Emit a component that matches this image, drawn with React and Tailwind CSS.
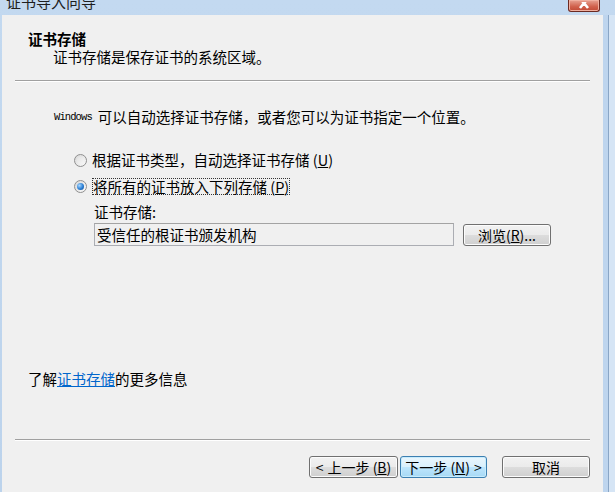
import React from "react";

const cjk = { fontFamily: '"Noto Sans CJK SC", "Noto Sans", sans-serif' };

function Key({ k }) {
  return (
    <span>
      (<span className="underline">{k}</span>)
    </span>
  );
}

function Radio({ checked }) {
  return (
    <span className="flex h-[13px] w-[13px] shrink-0 items-center justify-center rounded-full border border-[#8f8f8f] bg-gradient-to-br from-[#d8d8d8] to-[#fbfbfb]">
      {checked ? (
        <span className="h-[7px] w-[7px] rounded-full bg-[radial-gradient(circle_at_35%_35%,#a9d7ff,#2a7fd4_55%,#11468c)]" />
      ) : (
        <span className="h-[7px] w-[7px] rounded-full bg-gradient-to-br from-[#e4e4e4] to-[#f6f6f6]" />
      )}
    </span>
  );
}

function Btn({ children, primary, className = "" }) {
  return (
    <button
      className={
        "flex h-[22px] items-center justify-center rounded-[3px] border text-[14px] leading-none text-black " +
        (primary
          ? "border-[#3c7fb1] bg-[linear-gradient(#eaf6fd_0%,#d9f0fc_50%,#bee6fd_50%,#a7d9f5_100%)] shadow-[inset_0_0_0_1px_#c8ecfd] "
          : "border-[#707070] bg-[linear-gradient(#f2f2f2_0%,#ebebeb_50%,#dddddd_50%,#cfcfcf_100%)] shadow-[inset_0_0_0_1px_#fcfcfc] ") +
        className
      }
      style={cjk}
    >
      {children}
    </button>
  );
}

function Separator() {
  return <div className="mx-[13px] h-[2px] border-t border-[#a0a0a0] border-b border-b-white" />;
}

export default function App() {
  return (
    <div className="flex h-[492px] w-[615px] flex-col overflow-hidden bg-[linear-gradient(#c3d9f0,#bcd3ec)]" style={cjk}>
      {/* title bar */}
      <div className="flex h-[15px] items-start justify-between">
        <span className="-mt-[8px] pl-[6px] text-[15px] leading-[20px] text-[#1e1e1e]">证书导入向导</span>
        <div className="mr-[15px] flex h-[12px] w-[32px] items-end justify-center overflow-hidden rounded-b-[3px] border border-t-0 border-[#6b2a22] bg-[linear-gradient(#e8a393,#d0614c_60%,#c14a36)] shadow-[inset_0_0_0_1px_#f0b0a0]">
          <svg width="14" height="10" viewBox="0 0 14 10" className="-mb-[1px]">
            <path d="M2 -4 L7 1 L12 -4 M7 1 L3 6 M7 1 L11 6" stroke="#fff" strokeWidth="2.6" fill="none" />
          </svg>
        </div>
      </div>

      <div className="flex flex-1">
        <div className="w-[2px]" />
        {/* dialog body */}
        <div className="flex flex-1 flex-col bg-[#f0f0f0] text-[14.5px] leading-[16px] text-black">
          {/* header */}
          <div className="h-[65px] pt-[16px]">
            <div className="pl-[26px] font-bold">证书存储</div>
            <div className="mt-[2px] pl-[51px]">证书存储是保存证书的系统区域。</div>
          </div>
          <Separator />

          <div className="mt-[27px] flex h-[16px] items-center pl-[52px]">
            <span className="text-[10.5px] tracking-[-0.9px]" style={{ fontFamily: '"Liberation Mono", monospace' }}>Windows</span>
            <span className="ml-[6px]">可以自动选择证书存储，或者您可以为证书指定一个位置。</span>
          </div>

          <div className="mt-[27px] flex h-[16px] items-center gap-[5px] pl-[72px]">
            <Radio />
            <span>
              根据证书类型，自动选择证书存储 <Key k="U" />
            </span>
          </div>

          <div className="mt-[10px] flex h-[16px] items-center gap-[5px] pl-[72px]">
            <Radio checked />
            <span className="border border-dotted border-[#333] leading-[15px]">
              将所有的证书放入下列存储 <Key k="P" />
            </span>
          </div>

          <div className="mt-[10px] pl-[92px]">证书存储:</div>
          <div className="mt-[3px] flex items-center gap-[9px] pl-[92px]">
            <div className="flex h-[23px] w-[360px] items-center border border-[#abadb3] border-t-[#a3a3a3] bg-[#f0f0f0] pl-[2px]">
              受信任的根证书颁发机构
            </div>
            <Btn className="w-[88px]">
              浏览 <Key k="R" />...
            </Btn>
          </div>

          <div className="mt-[125px] pl-[26px]">
            了解<span className="text-[#0066cc] underline">证书存储</span>的更多信息
          </div>

          <div className="mt-[52px]">
            <Separator />
          </div>

          <div className="mt-[15px] flex justify-end pr-[13px]">
            <Btn className="w-[89px] gap-[4px]">
              <span>&lt;</span>
              <span>
                上一步 <Key k="B" />
              </span>
            </Btn>
            <Btn primary className="ml-[2px] w-[87px] gap-[4px]">
              <span>
                下一步 <Key k="N" />
              </span>
              <span>&gt;</span>
            </Btn>
            <Btn className="ml-[15px] w-[88px]">取消</Btn>
          </div>
        </div>
        {/* right frame */}
        <div className="flex w-[12px]">
          <div className="w-[5px] bg-[#bed5ee]" />
          <div className="w-[1px] bg-[#8aa6c6]" />
          <div className="flex-1 bg-[#d6e5f5]" />
        </div>
      </div>
    </div>
  );
}
